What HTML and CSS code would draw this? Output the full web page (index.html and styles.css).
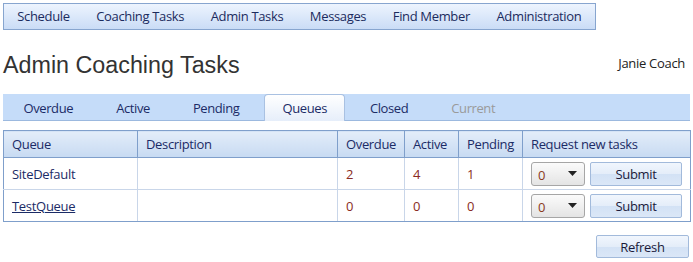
FILE: index.html
```html
<!DOCTYPE html>
<html>
<head>
<meta charset="utf-8">
<link rel="stylesheet" href="styles.css">
</head>
<body>
<nav class="topnav">
  <a class="nav-item">Schedule</a>
  <a class="nav-item">Coaching Tasks</a>
  <a class="nav-item">Admin Tasks</a>
  <a class="nav-item">Messages</a>
  <a class="nav-item">Find Member</a>
  <a class="nav-item">Administration</a>
</nav>
<div class="page-head">
  <h1 class="title">Admin Coaching Tasks</h1>
  <span class="user">Janie Coach</span>
</div>
<div class="tabbar">
  <span class="tab">Overdue</span>
  <span class="tab">Active</span>
  <span class="tab">Pending</span>
  <span class="tab tab-active">Queues</span>
  <span class="tab">Closed</span>
  <span class="tab tab-disabled">Current</span>
</div>
<table class="grid">
  <colgroup>
    <col class="c-queue"><col class="c-desc"><col class="c-over"><col class="c-act"><col class="c-pend"><col class="c-req">
  </colgroup>
  <thead>
    <tr><th>Queue</th><th>Description</th><th>Overdue</th><th>Active</th><th>Pending</th><th>Request new tasks</th></tr>
  </thead>
  <tbody>
    <tr>
      <td>SiteDefault</td><td></td><td class="num">2</td><td class="num">4</td><td class="num">1</td>
      <td><div class="req"><select class="count"><option>0</option></select><button class="btn btn-submit">Submit</button></div></td>
    </tr>
    <tr>
      <td><a class="link">TestQueue</a></td><td></td><td class="num">0</td><td class="num">0</td><td class="num">0</td>
      <td><div class="req"><select class="count"><option>0</option></select><button class="btn btn-submit">Submit</button></div></td>
    </tr>
  </tbody>
</table>
<div class="actions">
  <button class="btn btn-refresh">Refresh</button>
</div>
</body>
</html>
```
FILE: styles.css
```css
html, body { margin: 0; padding: 0; background: #fff; }
body {
  padding: 3px;
  font-family: "Open Sans", "Noto Sans", sans-serif;
  font-size: 13px;
  color: #1b2b66;
}
.topnav {
  display: inline-flex;
  height: 25px;
  border: 1px solid #87a5cf;
  background: linear-gradient(#edf4fe, #cadcf6);
}
.nav-item {
  padding: 0 13.3px;
  line-height: 25px;
  color: #1b2b5e;
  letter-spacing: -0.35px;
  cursor: pointer;
}
.page-head {
  display: flex;
  justify-content: space-between;
  align-items: flex-start;
  margin-top: 21px;
}
.title {
  margin: 0;
  font-family: "Liberation Sans", Arial, sans-serif;
  font-weight: normal;
  font-size: 23.3px;
  line-height: 28px;
  color: #333;
}
.user {
  margin-top: 3px;
  margin-right: 5px;
  color: #222;
  letter-spacing: -0.3px;
}
.tabbar {
  display: flex;
  margin-top: 15px;
  height: 26px;
  padding-left: 2px;
  background: #c5dcf9;
  border-bottom: 1px solid #9cb9df;
  align-items: flex-end;
}
.tab {
  height: 25px;
  line-height: 26px;
  padding: 0 17.5px;
  margin-right: 6px;
  border: 1px solid transparent;
  border-bottom: none;
  color: #1b2b66;
  letter-spacing: -0.4px;
}
.tab-active {
  background: linear-gradient(#ffffff, #e6eefa);
  border-color: #a9c1e2;
  border-radius: 4px 4px 0 0;
  margin-bottom: -1px;
  height: 26px;
}
.tab-disabled { color: #9a9a9a; }
.grid {
  margin-top: 9px;
  width: 687px;
  border-collapse: collapse;
  table-layout: fixed;
  border: 1px solid #7f9fcb;
}
.c-queue { width: 134px; }
.c-desc { width: 200px; }
.c-over { width: 67px; }
.c-act { width: 54px; }
.c-pend { width: 64px; }
.c-req { width: 168px; }
.grid th {
  height: 26px;
  padding: 0 8px;
  text-align: left;
  font-weight: normal;
  color: #1b2b66;
  background: linear-gradient(#e3edf9, #c7daf2);
  border: 1px solid #7f9fcb;
  letter-spacing: -0.35px;
}
.grid td {
  height: 31px;
  padding: 0 8px;
  border: 1px solid #c9d6e9;
  letter-spacing: -0.3px;
  color: #1b2b66;
}
.grid td:first-child { border-left-color: #7f9fcb; }
.grid td:last-child { border-right-color: #7f9fcb; }
.grid tr:last-child td { border-bottom-color: #7f9fcb; }
.num { color: #8a2c22 !important; }
.link { color: #1b2b66; text-decoration: underline; cursor: pointer; }
.req { display: flex; gap: 5px; align-items: center; }
.count {
  appearance: none;
  -webkit-appearance: none;
  width: 54px;
  height: 24px;
  margin: 0;
  padding: 2px 0 0 6px;
  font-family: inherit;
  font-size: 13px;
  color: #8a3a1c;
  border: 1px solid #a6a6a6;
  border-radius: 3px;
  background:
    url("data:image/svg+xml,%3Csvg xmlns='http://www.w3.org/2000/svg' width='9' height='5'%3E%3Cpath d='M0 0h9L4.5 5z' fill='%23222'/%3E%3C/svg%3E") no-repeat right 7px center,
    linear-gradient(#fbfbfb, #e4e4e4);
}
.btn {
  font-family: inherit;
  font-size: 13px;
  color: #1a1a3a;
  border: 1px solid #a2badb;
  border-radius: 2px;
  background: linear-gradient(#f1f6fd 0%, #e4edf9 50%, #d3e2f5 51%, #dbe7f7 100%);
  padding: 0;
  letter-spacing: -0.3px;
  cursor: pointer;
}
.btn-submit { width: 92px; height: 24px; }
.actions {
  display: flex;
  justify-content: flex-end;
  margin-top: 13px;
  padding-right: 1px;
}
.btn-refresh { width: 93px; height: 23px; }
```
